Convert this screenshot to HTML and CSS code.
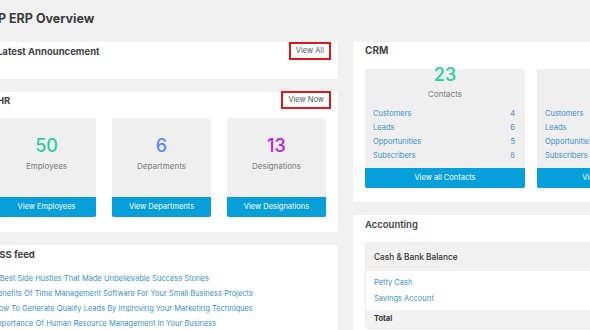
FILE: index.html
```html
<!DOCTYPE html>
<html lang="en">
<head>
    <meta charset="UTF-8">
    <meta name="viewport" content="width=device-width, initial-scale=1.0">
    <title>WP ERP Overview</title>
    <link rel="stylesheet" href="styles.css">
</head>
<body>

<div class="wrap">
    <h1 class="page-title">WP ERP Overview</h1>

    <div class="columns">
        <!-- COLUMNA IZQUIERDA -->
        <div class="column">
            <div class="card announce">
                <div class="card-head">
                    <h2>Latest Announcement</h2>
                    <a class="small-btn marked" href="#">View All</a>
                </div>
            </div>

            <div class="card hr">
                <div class="card-head">
                    <h2>HR</h2>
                    <a class="small-btn marked" href="#">View Now</a>
                </div>
                <div class="stats">
                    <div class="stat">
                        <div class="stat-num green">50</div>
                        <div class="stat-label">Employees</div>
                        <a class="blue-btn" href="#">View Employees</a>
                    </div>
                    <div class="stat">
                        <div class="stat-num blue">6</div>
                        <div class="stat-label">Departments</div>
                        <a class="blue-btn" href="#">View Departments</a>
                    </div>
                    <div class="stat">
                        <div class="stat-num purple">13</div>
                        <div class="stat-label">Designations</div>
                        <a class="blue-btn" href="#">View Designations</a>
                    </div>
                </div>
            </div>

            <div class="card rss">
                <h2>RSS feed</h2>
                <ul class="rss-list">
                    <li><a href="#">5 Best Side Hustles That Made Unbelievable Success Stories</a></li>
                    <li><a href="#">Benefits Of Time Management Software For Your Small Business Projects</a></li>
                    <li><a href="#">How To Generate Quality Leads By Improving Your Marketing Techniques</a></li>
                    <li><a href="#">Importance Of Human Resource Management In Your Business</a></li>
                </ul>
            </div>
        </div>

        <!-- COLUMNA DERECHA -->
        <div class="column">
            <div class="card crm">
                <h2>CRM</h2>
                <div class="crm-boxes">
                    <div class="crm-box">
                        <div class="stat-num green">23</div>
                        <div class="stat-label">Contacts</div>
                        <ul class="crm-list">
                            <li><a href="#">Customers</a><span>4</span></li>
                            <li><a href="#">Leads</a><span>6</span></li>
                            <li><a href="#">Opportunities</a><span>5</span></li>
                            <li><a href="#">Subscribers</a><span>8</span></li>
                        </ul>
                        <a class="blue-btn" href="#">View all Contacts</a>
                    </div>
                    <div class="crm-box">
                        <div class="stat-num green">3</div>
                        <div class="stat-label">Companies</div>
                        <ul class="crm-list">
                            <li><a href="#">Customers</a><span>1</span></li>
                            <li><a href="#">Leads</a><span>1</span></li>
                            <li><a href="#">Opportunities</a><span>0</span></li>
                            <li><a href="#">Subscribers</a><span>1</span></li>
                        </ul>
                        <a class="blue-btn" href="#">View all Companies</a>
                    </div>
                </div>
            </div>

            <div class="card accounting">
                <h2>Accounting</h2>
                <div class="panel">
                    <div class="panel-head">Cash &amp; Bank Balance</div>
                    <ul class="panel-list">
                        <li><a href="#">Petty Cash</a></li>
                        <li><a href="#">Savings Account</a></li>
                    </ul>
                    <div class="panel-total">Total</div>
                </div>
            </div>
        </div>
    </div>
</div>

</body>
</html>
```

FILE: styles.css
```css
body {
    font-family: Inter, "Noto Sans", sans-serif;
    margin: 0;
    padding: 0;
    background-color: #f1f1f1;
    color: #444;
}
.wrap {
    margin-left: -15px;
}
.page-title {
    margin: 0;
    padding-top: 9px;
    font-size: 12.5px;
    line-height: 20px;
    font-weight: 700;
    color: #3c3c3c;
    margin-bottom: 13px;
}
.columns {
    display: grid;
    grid-template-columns: 353px 353px;
    gap: 15px;
    align-items: start;
}
.column {
    display: flex;
    flex-direction: column;
    gap: 13px;
}
.card {
    background: #fff;
    border-radius: 3px;
    padding: 0 12px;
}
.card h2 {
    margin: 0;
    font-size: 9.5px;
    font-weight: 700;
    color: #444;
}
.card-head {
    display: flex;
    justify-content: space-between;
    align-items: center;
    height: 18px;
}
.small-btn {
    font-size: 7.5px;
    color: #555;
    text-decoration: none;
    padding: 0 5px;
    line-height: 14px;
    margin-right: -5px;
}
.marked {
    border: 2px solid #e3161b;
}
.announce {
    height: 37px;
    box-sizing: border-box;
}
.hr .card-head {
    margin-top: -1px;
}
.hr {
    padding-bottom: 15px;
}
.stats {
    display: grid;
    grid-template-columns: repeat(3, 1fr);
    gap: 16px;
    margin-top: 9px;
}
.stat {
    background: #efefef;
    border-radius: 2px;
    height: 99px;
    display: flex;
    flex-direction: column;
    align-items: center;
}
.stat-num {
    font-size: 18px;
    line-height: 20px;
    font-weight: 500;
    margin-top: 18px;
}
.green {
    color: #27cf9b;
}
.blue {
    color: #5b8af5;
}
.purple {
    color: #b81ee6;
}
.stat-label {
    font-size: 8px;
    color: #7a7a7a;
    margin-top: 5px;
}
.blue-btn {
    margin-top: auto;
    align-self: stretch;
    background: #079fda;
    color: #fff;
    text-align: center;
    text-decoration: none;
    font-size: 7.5px;
    line-height: 20px;
    border-radius: 0 0 2px 2px;
}
.rss {
    padding: 0 12px 12px 8px;
}
.rss h2 {
    line-height: 19px;
}
.rss-list {
    list-style: none;
    margin: 7px 0 0;
    padding: 0;
}
.rss-list li {
    font-size: 7.5px;
    line-height: 15px;
}
a {
    color: #3a8fc7;
    text-decoration: none;
}
.crm {
    padding-bottom: 14px;
}
.crm h2 {
    font-size: 10px;
    line-height: 17px;
}
.crm-boxes {
    display: grid;
    grid-template-columns: 160px 160px;
    gap: 12px;
    margin-top: 10px;
}
.crm-box {
    background: #efefef;
    border-radius: 2px;
    height: 119px;
    display: flex;
    flex-direction: column;
    align-items: center;
}
.crm-box .stat-num {
    margin-top: -4px;
}
.crm-box .stat-label {
    margin-top: 4px;
}
.crm-list {
    list-style: none;
    margin: 8px 0 0;
    padding: 0 10px 0 8px;
    align-self: stretch;
}
.crm-list li {
    display: flex;
    justify-content: space-between;
    font-size: 7.5px;
    line-height: 14px;
}
.crm-list span {
    color: #3a8fc7;
}
.accounting {
    height: 140px;
}
.accounting h2 {
    font-weight: 600;
    line-height: 19px;
}
.panel {
    margin-top: 8px;
    border: 1px solid #eaeaea;
    border-radius: 3px;
    overflow: hidden;
}
.panel-head {
    background: #f1f1f1;
    padding: 0 8px;
    line-height: 28px;
    font-size: 8.3px;
    font-weight: 500;
    color: #333;
}
.panel-list {
    list-style: none;
    margin: 0;
    padding: 4px 8px 3px;
}
.panel-list li {
    font-size: 7.5px;
    line-height: 16px;
}
.panel-total {
    background: #f1f1f1;
    padding: 0 8px;
    line-height: 18px;
    font-size: 7.5px;
    font-weight: 700;
    color: #333;
}
```
